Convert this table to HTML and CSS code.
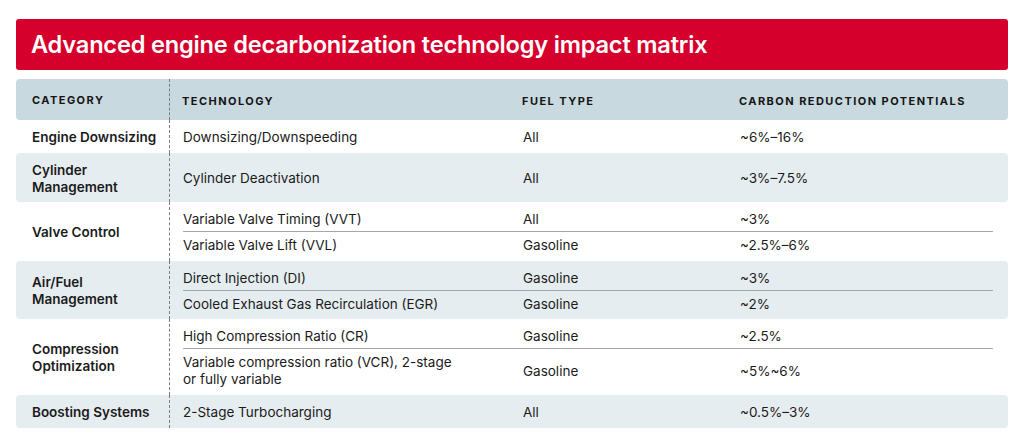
FILE: index.html
```html
<!DOCTYPE html>
<html lang="en">
<head>
<meta charset="utf-8">
<title>Advanced engine decarbonization technology impact matrix</title>
<link rel="stylesheet" href="styles.css">
</head>
<body>
<div class="page">
  <h1 class="title">Advanced engine decarbonization technology impact matrix</h1>
  <div class="matrix">
    <div class="head">
      <div class="cat">Category</div>
      <div class="subs">
        <div class="sub">
          <div class="tech">Technology</div>
          <div class="fuel">Fuel type</div>
          <div class="carbon">Carbon reduction potentials</div>
        </div>
      </div>
    </div>

    <div class="group">
      <div class="cat">Engine Downsizing</div>
      <div class="subs">
        <div class="sub"><div class="tech">Downsizing/Downspeeding</div><div class="fuel">All</div><div class="carbon">~6%–16%</div></div>
      </div>
    </div>

    <div class="group shaded">
      <div class="cat">Cylinder<br>Management</div>
      <div class="subs">
        <div class="sub"><div class="tech">Cylinder Deactivation</div><div class="fuel">All</div><div class="carbon">~3%–7.5%</div></div>
      </div>
    </div>

    <div class="group multi">
      <div class="cat">Valve Control</div>
      <div class="subs">
        <div class="sub"><div class="tech">Variable Valve Timing (VVT)</div><div class="fuel">All</div><div class="carbon">~3%</div></div>
        <div class="sub"><div class="tech">Variable Valve Lift (VVL)</div><div class="fuel">Gasoline</div><div class="carbon">~2.5%–6%</div></div>
      </div>
    </div>

    <div class="group shaded multi">
      <div class="cat">Air/Fuel<br>Management</div>
      <div class="subs">
        <div class="sub"><div class="tech">Direct Injection (DI)</div><div class="fuel">Gasoline</div><div class="carbon">~3%</div></div>
        <div class="sub"><div class="tech">Cooled Exhaust Gas Recirculation (EGR)</div><div class="fuel">Gasoline</div><div class="carbon">~2%</div></div>
      </div>
    </div>

    <div class="group multi">
      <div class="cat">Compression<br>Optimization</div>
      <div class="subs">
        <div class="sub"><div class="tech">High Compression Ratio (CR)</div><div class="fuel">Gasoline</div><div class="carbon">~2.5%</div></div>
        <div class="sub"><div class="tech">Variable compression ratio (VCR), 2-stage<br>or fully variable</div><div class="fuel">Gasoline</div><div class="carbon">~5%~6%</div></div>
      </div>
    </div>

    <div class="group shaded">
      <div class="cat">Boosting Systems</div>
      <div class="subs">
        <div class="sub"><div class="tech">2-Stage Turbocharging</div><div class="fuel">All</div><div class="carbon">~0.5%–3%</div></div>
      </div>
    </div>
  </div>
</div>
</body>
</html>
```
FILE: styles.css
```css
* { box-sizing: border-box; }
html, body { margin: 0; padding: 0; background: #ffffff; }
body {
  font-family: "Inter", "Liberation Sans", sans-serif;
  color: #1b1b1b;
}
.page {
  padding: 19px 16px 0 16px;
}
.title {
  margin: 0;
  background: #d5002b;
  color: #ffffff;
  border-radius: 3px;
  height: 51px;
  padding: 0 15px;
  display: flex;
  align-items: center;
  font-size: 23.6px;
  font-weight: 600;
  letter-spacing: -0.2px;
}
.matrix {
  margin-top: 9px;
  font-size: 13.5px;
  line-height: 17px;
}
.head, .group {
  display: flex;
  align-items: stretch;
  border-radius: 4px;
}
.head {
  background: #c8d9e0;
  height: 41px;
  font-size: 11px;
  font-weight: 700;
  letter-spacing: 1.45px;
  text-transform: uppercase;
  color: #151515;
}
.shaded { background: #e6edf0; }
.cat {
  width: 153px;
  flex: none;
  padding: 8.5px 0 6.5px 16px;
  display: flex;
  align-items: center;
  font-weight: 600;
}
.head .cat { padding: 1px 0 0 16px; font-weight: 700; }
.subs {
  flex: 1;
  border-left: 1px dashed #7d7d7d;
  padding: 4px 15px 4px 13px;
  display: flex;
  flex-direction: column;
  justify-content: center;
}
.multi .subs { padding-top: 4px; padding-bottom: 3.5px; }
.head .subs { padding: 1px 15px 0 12px; }
.sub {
  display: grid;
  grid-template-columns: 340px 217px 1fr;
  align-items: center;
  padding: 5px 0 3px;
}
.sub + .sub { border-top: 1px solid #a6a6a6; }
.tech { padding-right: 30px; }
```
